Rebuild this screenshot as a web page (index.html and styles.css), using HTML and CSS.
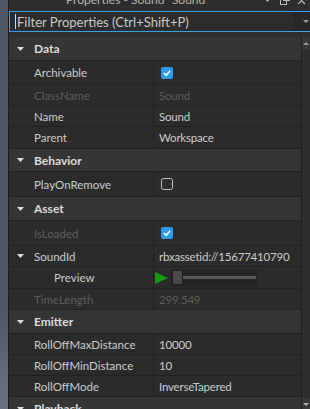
FILE: index.html
```html
<!DOCTYPE html>
<html>
<head>
<meta charset="utf-8">
<link rel="stylesheet" href="styles.css">
</head>
<body>
<div class="app">
  <div class="viewport"></div>
  <div class="panel">
    <div class="titlebar">
      <span class="title">Properties - Sound "Sound"</span>
      <div class="title-icons">
        <svg class="ti-dd" width="5" height="4" viewBox="0 0 5 4"><polygon points="0,-1 5,-1 2.5,2" fill="#bdbdbd"/></svg>
        <svg class="ti-undock" width="10" height="7" viewBox="0 0 10 7"><rect x="0.5" y="-3.5" width="6" height="8" fill="none" stroke="#bdbdbd"/><rect x="3.5" y="-6.5" width="6" height="7" fill="#2e2e2e" stroke="#bdbdbd"/></svg>
        <svg class="ti-close" width="7" height="6" viewBox="0 0 7 6"><path d="M0 -3 L7 4 M7 -3 L0 4" stroke="#bdbdbd" stroke-width="1.2"/></svg>
      </div>
    </div>
    <div class="filter">
      <span class="caret"></span>
      <span class="filter-text">Filter Properties (Ctrl+Shift+P)</span>
      <div class="filter-drop"><svg width="6" height="3" viewBox="0 0 6 3"><polygon points="0,0 6,0 3,3" fill="#9a9a9a"/></svg></div>
    </div>
    <div class="props">
      <div class="grid">
        <div class="row group h24"><svg class="tri" width="7" height="4" viewBox="0 0 7 4"><polygon points="0,0 7,0 3.5,4" fill="#dcdcdc"/></svg>Data</div>
        <div class="row h24"><div class="name">Archivable</div><div class="value"><svg class="cb" width="12" height="12" viewBox="0 0 12 12"><rect width="12" height="12" rx="2" fill="#2b9bf0"/><path d="M3 6.2 L5.2 8.3 L9.2 3.8" stroke="#fff" stroke-width="1.6" fill="none"/></svg></div></div>
        <div class="row h21"><div class="name dim">ClassName</div><div class="value dim">Sound</div></div>
        <div class="row h21"><div class="name">Name</div><div class="value">Sound</div></div>
        <div class="row h22"><div class="name">Parent</div><div class="value">Workspace</div></div>
        <div class="row group h23"><svg class="tri" width="7" height="4" viewBox="0 0 7 4"><polygon points="0,0 7,0 3.5,4" fill="#dcdcdc"/></svg>Behavior</div>
        <div class="row h25"><div class="name">PlayOnRemove</div><div class="value"><svg class="cb" width="12" height="12" viewBox="0 0 12 12"><rect x="0.5" y="0.5" width="11" height="11" rx="2" fill="none" stroke="#c4c4c4"/></svg></div></div>
        <div class="row group h24"><svg class="tri" width="7" height="4" viewBox="0 0 7 4"><polygon points="0,0 7,0 3.5,4" fill="#dcdcdc"/></svg>Asset</div>
        <div class="row h25"><div class="name dim">IsLoaded</div><div class="value"><svg class="cb" width="12" height="12" viewBox="0 0 12 12"><rect width="12" height="12" rx="2" fill="#2b9bf0"/><path d="M3 6.2 L5.2 8.3 L9.2 3.8" stroke="#fff" stroke-width="1.6" fill="none"/></svg></div></div>
        <div class="row h21"><div class="name expand"><svg class="tri" width="7" height="4" viewBox="0 0 7 4"><polygon points="0,0 7,0 3.5,4" fill="#dcdcdc"/></svg>SoundId</div><div class="value">rbxassetid://15677410790</div></div>
        <div class="row h22"><div class="name sub">Preview</div><div class="value preview">
          <svg class="play" width="13" height="12" viewBox="0 0 13 12"><polygon points="0,0 13,6 0,12" fill="#129a12"/></svg>
          <div class="slider"><div class="thumb"></div><div class="track"></div></div>
        </div></div>
        <div class="row h21"><div class="name dim">TimeLength</div><div class="value dim">299.549</div></div>
        <div class="row group h24"><svg class="tri" width="7" height="4" viewBox="0 0 7 4"><polygon points="0,0 7,0 3.5,4" fill="#dcdcdc"/></svg>Emitter</div>
        <div class="row h21"><div class="name">RollOffMaxDistance</div><div class="value">10000</div></div>
        <div class="row h21"><div class="name">RollOffMinDistance</div><div class="value">10</div></div>
        <div class="row h21"><div class="name">RollOffMode</div><div class="value">InverseTapered</div></div>
        <div class="row group h24"><svg class="tri" width="7" height="4" viewBox="0 0 7 4"><polygon points="0,0 7,0 3.5,4" fill="#dcdcdc"/></svg>Playback</div>
      </div>
      <div class="scrollbar">
        <div class="sb-btn"><svg width="6" height="3" viewBox="0 0 6 3"><polygon points="0,3 6,3 3,0" fill="#9a9a9a"/></svg></div>
        <div class="sb-track"></div>
        <div class="sb-btn"><svg width="6" height="3" viewBox="0 0 6 3"><polygon points="0,0 6,0 3,3" fill="#b0b0b0"/></svg></div>
      </div>
    </div>
  </div>
</div>
</body>
</html>
```

FILE: styles.css
```css
* { box-sizing: border-box; }
html, body { margin: 0; padding: 0; }
body {
  width: 310px;
  height: 409px;
  overflow: hidden;
  background: #4d5562;
  font-family: Lato, "Liberation Sans", sans-serif;
  font-size: 11.5px;
  color: #cccccc;
}
.app { display: flex; height: 409px; }
.viewport {
  width: 8px;
  flex: none;
  background: linear-gradient(#4e5663 0, #4e5663 74%, #6c727d 100%);
}
.panel {
  flex: 1;
  min-width: 0;
  border-left: 1px solid #1c1c1c;
  background: #2e2e2e;
  display: flex;
  flex-direction: column;
  overflow: hidden;
}
.titlebar {
  height: 11px;
  flex: none;
  display: flex;
  align-items: flex-start;
  overflow: hidden;
  background: #2e2e2e;
}
.title {
  padding-left: 57px;
  line-height: 12px;
  margin-top: -6px;
  color: #b4b4b4;
  font-size: 12px;
  white-space: nowrap;
}
.title-icons {
  margin-left: auto;
  display: flex;
  align-items: flex-start;
  padding-right: 5px;
}
.ti-dd { margin-right: 10px; }
.ti-undock { margin-right: 8px; }

.filter {
  height: 21px;
  flex: none;
  display: flex;
  align-items: center;
  border: 1px solid #37a0e6;
  border-right: 0;
  background: #2c2c2c;
}
.caret { width: 1px; height: 15px; background: #d8d8d8; margin-left: 5px; flex: none; }
.filter-text { margin-left: 1px; color: #c8c8c8; font-size: 13px; white-space: nowrap; }
.filter-drop {
  margin-left: auto;
  width: 17px;
  align-self: stretch;
  background: #272727;
  display: flex;
  align-items: center;
  padding-left: 10px;
}

.props { display: flex; height: 374px; margin-top: 5px; flex: none; }
.grid { flex: 1; min-width: 0; display: flex; flex-direction: column; overflow: hidden; }
.row {
  display: flex;
  flex: none;
  border-bottom: 1px solid #212121;
  background: #2b2b2b;
}
.h21 { height: 21px; }
.h22 { height: 22px; }
.h23 { height: 23px; }
.h24 { height: 24px; }
.h25 { height: 25px; }
.name {
  width: 145px;
  flex: none;
  border-right: 1px solid #212121;
  padding-left: 25px;
  display: flex;
  align-items: center;
  white-space: nowrap;
}
.name.expand { padding-left: 8px; }
.name.sub { padding-left: 45px; }
.value {
  flex: 1;
  min-width: 0;
  display: flex;
  align-items: center;
  padding-left: 5px;
  white-space: nowrap;
  letter-spacing: -0.2px;
}
.dim { color: #5e5e5e; }
.group {
  background: #353535;
  align-items: center;
  padding-left: 8px;
  font-weight: bold;
  font-size: 12px;
  color: #dcdcdc;
}
.tri { margin-right: 10px; flex: none; }
.cb { margin-left: 2px; }
.value.preview { padding-left: 1px; }
.play { flex: none; }
.slider {
  margin-left: 3px;
  width: 87px;
  height: 18px;
  background: #252525;
  display: flex;
  align-items: center;
}
.thumb {
  margin-left: 1px;
  width: 11px;
  height: 15px;
  background: #4a4a4a;
  border: 1px solid #1e1e1e;
  flex: none;
}
.track { flex: 1; height: 3px; background: #575757; margin-right: 2px; }

.scrollbar {
  width: 9px;
  flex: none;
  border-left: 1px solid #1e1e1e;
  display: flex;
  flex-direction: column;
  background: #2e2e2e;
}
.sb-btn {
  height: 13px;
  flex: none;
  background: #383838;
  display: flex;
  align-items: center;
  justify-content: center;
}
.sb-track { flex: 1; }
```
